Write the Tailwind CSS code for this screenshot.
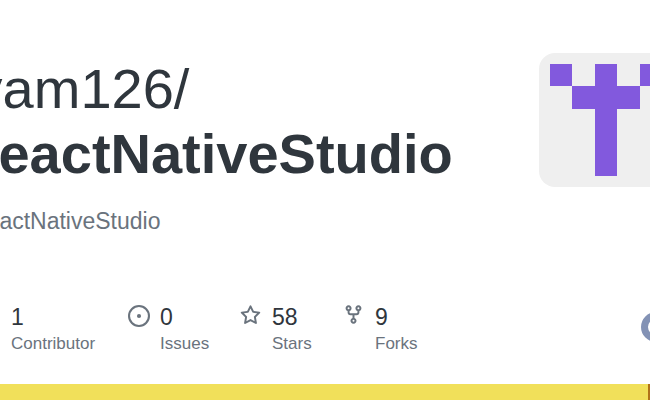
<!DOCTYPE html>
<html lang="en">
<head>
    <meta charset="UTF-8">
    <title>ReactNativeStudio</title>
    <script src="https://cdn.jsdelivr.net/npm/@tailwindcss/browser@4"></script>
</head>
<body class="bg-white overflow-hidden">
<div class="w-[650px] h-[400px] overflow-hidden flex flex-col font-['Liberation_Sans',sans-serif] text-[#24292f]">

    <!-- repo title and logo -->
    <div class="flex justify-between pt-[53px] h-[300px] shrink-0">
        <div class="ml-[-42px] whitespace-nowrap">
            <div class="text-[56px] leading-[65px] text-[#2f363d] mt-[3px] ml-[-55px]">shivam126/</div>
            <div class="text-[56px] leading-[65px] font-bold text-[#2f363d]">ReactNativeStudio</div>
            <div class="text-[23px] leading-[28px] text-[#6a737d] mt-[21px] ml-[12px]">ReactNativeStudio</div>
        </div>
        <div class="w-[134px] h-[134px] shrink-0 mr-[-23px] rounded-[16px] bg-[#efefef] p-[11px]">
            <div class="grid grid-cols-5 grid-rows-5 w-[112px] h-[112px]">
                <div class="bg-[#8259dd]"></div><div></div><div class="bg-[#8259dd]"></div><div></div><div class="bg-[#8259dd]"></div>
                <div></div><div class="bg-[#8259dd]"></div><div class="bg-[#8259dd]"></div><div class="bg-[#8259dd]"></div><div></div>
                <div></div><div></div><div class="bg-[#8259dd]"></div><div></div><div></div>
                <div></div><div></div><div class="bg-[#8259dd]"></div><div></div><div></div>
                <div></div><div></div><div class="bg-[#8259dd]"></div><div></div><div></div>
            </div>
        </div>
    </div>

    <!-- stats -->
    <div class="flex items-start h-[84px] shrink-0">
        <div class="ml-[11px] w-[117px]">
            <div class="text-[23px] leading-[28px] mt-[3px] text-[#2f363d]">1</div>
            <div class="text-[17px] leading-[22px] text-[#6a737d] mt-[2px]">Contributor</div>
        </div>
        <div class="w-[112px] flex gap-[10px]">
            <svg class="w-[22px] h-[22px] mt-[5px] shrink-0" viewBox="0 0 16 16" fill="#6a737d"><path d="M8 9.5a1.5 1.5 0 1 0 0-3 1.5 1.5 0 0 0 0 3Z"/><path d="M8 0a8 8 0 1 1 0 16A8 8 0 0 1 8 0ZM1.5 8a6.5 6.5 0 1 0 13 0 6.5 6.5 0 0 0-13 0Z"/></svg>
            <div>
                <div class="text-[23px] leading-[28px] mt-[3px] text-[#2f363d]">0</div>
                <div class="text-[17px] leading-[22px] text-[#6a737d] mt-[2px]">Issues</div>
            </div>
        </div>
        <div class="w-[103px] flex gap-[11px]">
            <svg class="w-[21px] h-[21px] mt-[5px] shrink-0" viewBox="0 0 16 16" fill="#6a737d"><path d="M8 .25a.75.75 0 0 1 .673.418l1.882 3.815 4.21.612a.75.75 0 0 1 .416 1.279l-3.046 2.97.719 4.192a.751.751 0 0 1-1.088.791L8 12.347l-3.766 1.98a.75.75 0 0 1-1.088-.79l.72-4.194L.818 6.374a.75.75 0 0 1 .416-1.28l4.21-.611L7.327.668A.75.75 0 0 1 8 .25Zm0 2.445L6.615 5.5a.75.75 0 0 1-.564.41l-3.097.45 2.24 2.184a.75.75 0 0 1 .216.664l-.528 3.084 2.769-1.456a.75.75 0 0 1 .698 0l2.77 1.456-.53-3.084a.75.75 0 0 1 .216-.664l2.24-2.183-3.096-.45a.75.75 0 0 1-.564-.41L8 2.694Z"/></svg>
            <div>
                <div class="text-[23px] leading-[28px] mt-[3px] text-[#2f363d]">58</div>
                <div class="text-[17px] leading-[22px] text-[#6a737d] mt-[2px]">Stars</div>
            </div>
        </div>
        <div class="flex gap-[11px]">
            <svg class="w-[21px] h-[21px] mt-[4px] shrink-0" viewBox="0 0 16 16" fill="#6a737d"><path d="M5 5.372v.878c0 .414.336.75.75.75h4.5a.75.75 0 0 0 .75-.75v-.878a2.25 2.25 0 1 1 1.5 0v.878a2.25 2.25 0 0 1-2.25 2.25h-1.5v2.128a2.251 2.251 0 1 1-1.5 0V8.5h-1.5A2.25 2.25 0 0 1 3.5 6.25v-.878a2.25 2.25 0 1 1 1.5 0ZM5 3.25a.75.75 0 1 0-1.5 0 .75.75 0 0 0 1.5 0Zm6.75.75a.75.75 0 1 0 0-1.5.75.75 0 0 0 0 1.5Zm-3 8.75a.75.75 0 1 0-1.5 0 .75.75 0 0 0 1.5 0Z"/></svg>
            <div>
                <div class="text-[23px] leading-[28px] mt-[3px] text-[#2f363d]">9</div>
                <div class="text-[17px] leading-[22px] text-[#6a737d] mt-[2px]">Forks</div>
            </div>
        </div>
        <div class="ml-auto mr-[-21px] mt-[12px] w-[30px] h-[30px] rounded-full border-[7px] border-[#8392b5] shrink-0"></div>
    </div>

    <!-- language bar -->
    <div class="flex h-[16px] shrink-0">
        <div class="w-[648px] bg-[#f1e05a]"></div>
        <div class="flex-1 bg-[#b07219]"></div>
    </div>
</div>
</body>
</html>
